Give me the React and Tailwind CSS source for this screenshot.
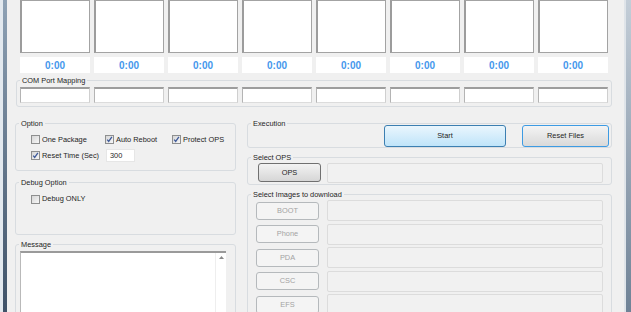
// App.jsx
import React from 'react';

const slots = [0, 1, 2, 3, 4, 5, 6, 7];
const images = ['BOOT', 'Phone', 'PDA', 'CSC', 'EFS'];

const Check = ({ checked }) => (
  <span className="w-[9px] h-[9px] shrink-0 border border-[#8e8f8f] bg-linear-to-br from-[#d6d6d6] to-[#f7f7f7] flex items-center justify-center">
    {checked && (
      <svg width="7" height="7" viewBox="0 0 7 7">
        <path d="M1.2 3.6 L2.7 5.4 L5.9 0.9" stroke="#3e5a9a" strokeWidth="1.3" fill="none" />
      </svg>
    )}
  </span>
);

const Box = ({ label, checked, className = '' }) => (
  <label className={`flex items-center gap-[2px] ${className}`}>
    <Check checked={checked} />
    <span>{label}</span>
  </label>
);

const Group = ({ title, className = '', children }) => (
  <fieldset className={`border border-[#d8dce0] rounded-[3px] ${className}`}>
    <legend className="ml-[3px] px-[2px] leading-[9px] text-[#1e1e1e]">{title}</legend>
    {children}
  </fieldset>
);

const App = () => {
  return (
    <div className="w-[631px] h-[312px] overflow-hidden bg-[#f0f0f0] flex text-[7.4px] text-[#1e1e1e] font-['Liberation_Sans',Arial,sans-serif]">
      {/* window frame left */}
      <div className="w-[7px] flex shrink-0">
        <div className="w-[3px] bg-[#e3e9ef]"></div>
        <div className="w-[4px] bg-linear-to-b from-[#8fa2b5] to-[#3f5268]"></div>
      </div>

      <div className="flex-1 flex flex-col">
        {/* Port boxes */}
        <div className="flex gap-[4px] pl-[13px]">
          {slots.map((i) => (
            <div key={i} className="w-[70px] h-[53px] bg-white border border-[#a3a3a3] border-l-2 border-l-[#9c9c9c]"></div>
          ))}
        </div>
        <div className="flex gap-[4px] pl-[13px] mt-[4px]">
          {slots.map((i) => (
            <div key={i} className="w-[70px] h-[16px] bg-white flex items-center justify-center text-[10px] font-bold text-[#4597ec]">
              0:00
            </div>
          ))}
        </div>

        {/* COM Port Mapping */}
        <Group title="COM Port Mapping" className="ml-[9px] w-[596px] mt-[3px]">
          <div className="flex gap-[4px] pl-[3px] pt-[2px] pb-[3px]">
            {slots.map((i) => (
              <div key={i} className="w-[70px] h-[16px] bg-white border-t-2 border-t-[#9d9d9d] border-l border-l-[#b4b4b4] border-r border-r-[#cfcfcf] border-b border-b-[#dcdcdc]"></div>
            ))}
          </div>
        </Group>

        {/* lower section */}
        <div className="flex gap-[11px] ml-[8px] mt-[12px]">
          {/* left column */}
          <div className="w-[221px] flex flex-col">
            <Group title="Option">
              <div className="flex flex-col gap-[4px] pl-[15px] pt-[6px] pb-[8px]">
                <div className="flex items-center h-[11px]">
                  <Box label="One Package" className="w-[74px]" />
                  <Box label="Auto Reboot" checked className="w-[67px]" />
                  <Box label="Protect OPS" checked />
                </div>
                <div className="flex items-center h-[13px]">
                  <Box label="Reset Time (Sec)" checked className="w-[75px]" />
                  <div className="w-[29px] h-[13px] bg-white border border-[#e6e6e6] flex items-center pl-[3px]">300</div>
                </div>
              </div>
            </Group>

            <Group title="Debug Option" className="mt-[7px]">
              <div className="pl-[15px] pt-[7px] pb-[30px]">
                <Box label="Debug ONLY" className="h-[10px]" />
              </div>
            </Group>

            <Group title="Message" className="mt-[5px]">
              <div className="pl-[4px] pt-[2px]">
                <div className="w-[206px] h-[80px] bg-white border-t-2 border-t-[#9a9a9a] border-l border-l-[#b9b9b9] flex justify-end">
                  <div className="w-[11px] border-l border-l-[#eeeeee] flex justify-center pt-[3px]">
                    <svg width="5" height="3" viewBox="0 0 5 3">
                      <path d="M0 3 L2.5 0 L5 3 Z" fill="#8a8a8a" />
                    </svg>
                  </div>
                </div>
              </div>
            </Group>
          </div>

          {/* right column */}
          <div className="w-[365px] flex flex-col">
            <Group title="Execution">
              <div className="flex justify-end gap-[16px] pr-[2px] -mt-[3px]">
                <button className="w-[122px] h-[22px] rounded-[3px] border border-[#3c7fb1] bg-linear-to-b from-[#eaf6fd] to-[#bfe4f9] text-[#1e1e1e]">
                  Start
                </button>
                <button className="w-[87px] h-[22px] rounded-[3px] border border-[#3d9be3] bg-linear-to-b from-[#f4f4f4] to-[#d9d9d9] text-[#1e1e1e]">
                  Reset Files
                </button>
              </div>
            </Group>

            <Group title="Select OPS" className="mt-[5px]">
              <div className="flex items-start pl-[10px] pt-[1px] pb-[1px]">
                <button className="w-[63px] h-[19px] rounded-[3px] border border-[#707070] bg-linear-to-b from-[#f3f3f3] to-[#d6d6d6] text-[#1e1e1e]">
                  OPS
                </button>
                <div className="ml-[6px] w-[276px] h-[20px] rounded-[2px] border border-[#dcdcdc] bg-[#f1f1f1]"></div>
              </div>
            </Group>

            <Group title="Select Images to download" className="mt-[5px]">
              <div className="flex flex-col gap-[2.5px] pl-[8px] pt-[1px]">
                {images.map((name) => (
                  <div key={name} className="flex items-center h-[21px]">
                    <button className="w-[63px] h-[18px] rounded-[3px] border border-[#b5b9bc] bg-[#f4f4f4] text-[#a3a3a3]">
                      {name}
                    </button>
                    <div className="ml-[8px] w-[276px] h-[21px] rounded-[2px] border border-[#dcdcdc] bg-[#f1f1f1]"></div>
                  </div>
                ))}
              </div>
            </Group>
          </div>
        </div>
      </div>

      {/* window frame right */}
      <div className="w-[7px] flex shrink-0">
        <div className="w-[2px] bg-[#dfe4e9]"></div>
        <div className="w-[5px] bg-linear-to-b from-[#c4ced8] to-[#6f8296]"></div>
      </div>
    </div>
  );
};

export default App;
